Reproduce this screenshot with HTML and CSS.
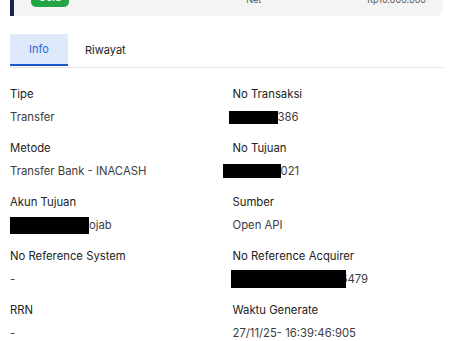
FILE: index.html
```html
<!DOCTYPE html>
<html lang="id">
<head>
<meta charset="utf-8">
<link rel="stylesheet" href="styles.css">
</head>
<body>
<div class="page">
  <div class="summary">
    <span class="badge">Gold</span>
    <span class="net-label">Net</span>
    <span class="net-amount">Rp10.000.000</span>
  </div>

  <div class="tabs">
    <div class="tab active">Info</div>
    <div class="tab">Riwayat</div>
  </div>

  <div class="grid">
    <div class="field">
      <div class="label">Tipe</div>
      <div class="value">Transfer</div>
    </div>
    <div class="field">
      <div class="label">No Transaksi</div>
      <div class="value"><span class="redact r-trx"></span>386</div>
    </div>
    <div class="field">
      <div class="label">Metode</div>
      <div class="value">Transfer Bank - INACASH</div>
    </div>
    <div class="field">
      <div class="label">No Tujuan</div>
      <div class="value"><span class="redact r-tujuan"></span>021</div>
    </div>
    <div class="field">
      <div class="label">Akun Tujuan</div>
      <div class="value"><span class="redact r-akun"></span>ojab</div>
    </div>
    <div class="field">
      <div class="label">Sumber</div>
      <div class="value">Open API</div>
    </div>
    <div class="field">
      <div class="label">No Reference System</div>
      <div class="value">-</div>
    </div>
    <div class="field">
      <div class="label">No Reference Acquirer</div>
      <div class="value"><span class="redact r-acq"></span>6479</div>
    </div>
    <div class="field">
      <div class="label">RRN</div>
      <div class="value">-</div>
    </div>
    <div class="field">
      <div class="label">Waktu Generate</div>
      <div class="value">27/11/25- 16:39:46:905</div>
    </div>
  </div>
</div>
</body>
</html>
```
FILE: styles.css
```css
html, body {
  margin: 0;
  padding: 0;
  background: #ffffff;
}
body {
  font-family: Inter, "Noto Sans", "Liberation Sans", sans-serif;
  color: #222222;
  overflow: hidden;
}
.page {
  padding: 0 11px 0 10px;
}
.summary {
  margin-top: -24px;
  height: 40px;
  box-sizing: border-box;
  background: #f4f4f4;
  border-left: 4px solid #16254f;
  border-radius: 0 8px 8px 0;
  display: flex;
  align-items: flex-end;
  padding: 0 17px 9px 17px;
  font-size: 9px;
  line-height: 12px;
  color: #555;
}
.badge {
  background: #22a447;
  color: #fff;
  font-weight: 600;
  border-radius: 5px;
  width: 38px;
  height: 20px;
  display: flex;
  align-items: center;
  justify-content: center;
  font-size: 10px;
}
.net-label {
  margin-left: auto;
  margin-right: 106px;
  margin-bottom: 1px;
}
.net-amount {
  margin-bottom: 1px;
}
.tabs {
  margin-top: 18px;
  display: flex;
  border-bottom: 1px solid #e3e3e3;
}
.tab {
  height: 32px;
  padding: 0 17px;
  display: flex;
  align-items: center;
  font-size: 11px;
  font-weight: 400;
  color: #222;
  border-bottom: 2px solid transparent;
  margin-bottom: -1px;
}
.tab.active {
  width: 58px;
  box-sizing: border-box;
  justify-content: center;
  padding: 0;
  background: #dde9fb;
  color: #2d67d8;
  border-bottom-color: #1f56c9;
}
.grid {
  display: grid;
  grid-template-columns: 1fr 1fr;
  column-gap: 12px;
  row-gap: 15px;
  padding-top: 18px;
}
.label {
  font-size: 11.3px;
  line-height: 16px;
  color: #222;
}
.value {
  margin-top: 7px;
  height: 16px;
  font-size: 11.3px;
  line-height: 16px;
  color: #3d3d3d;
  display: flex;
  align-items: center;
}
.redact {
  display: inline-block;
  flex-shrink: 0;
  background: #000;
  position: relative;
  z-index: 1;
}
.r-trx {
  width: 49px;
  height: 13px;
  margin-left: -4px;
}
.r-tujuan {
  width: 58px;
  height: 14px;
  margin-left: -10px;
}
.r-akun {
  width: 79px;
  height: 17px;
}
.r-acq {
  width: 115px;
  height: 18px;
  margin-left: -2px;
  margin-right: -5px;
}
```
